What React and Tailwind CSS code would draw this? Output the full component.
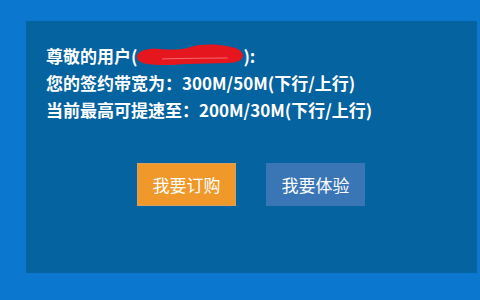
import React from 'react';

const Redact = () => (
  <span className="inline-block w-[106px] h-[20px] align-[-3px] relative">
    <svg viewBox="0 0 110 22" preserveAspectRatio="none" className="absolute -top-[2px] left-0 w-[106px] h-[22px]">
      <path
        d="M0 12 C 2 6, 12 4, 24 5 C 36 6, 46 6, 56 3 C 66 0, 80 0, 92 2 C 102 3, 109 6, 110 11 C 110 16, 104 19, 94 19 C 80 19, 66 20, 52 20 C 36 21, 18 22, 6 19 C 1 17, 0 15, 0 12 Z"
        fill="#e6161e"
      />
      <path d="M26 15 C 48 14, 70 14, 94 14" stroke="#f26a6e" strokeWidth="1.2" fill="none" />
    </svg>
  </span>
);

export default function App() {
  return (
    <div className="w-[480px] h-[300px] bg-[#0b77cf] pt-[21px] pl-[26px] font-['Noto_Sans_CJK_SC','Noto_Sans',sans-serif]">
      <div className="w-[451px] h-[252px] bg-[#05639f] pt-[21px] pl-[20px] flex flex-col">
        <div className="text-white font-bold text-[17px] leading-[27px]">
          <p>
            尊敬的用户(<Redact />):
          </p>
          <p>您的签约带宽为：300M/50M(下行/上行)</p>
          <p>当前最高可提速至：200M/30M(下行/上行)</p>
        </div>
        <div className="flex gap-[30px] mt-[40px] pl-[91px]">
          <button className="w-[99px] h-[43px] bg-[#f0982a] border border-[#d9a060] text-white text-[17px]">
            我要订购
          </button>
          <button className="w-[99px] h-[43px] bg-[#3a76b6] text-white text-[17px]">
            我要体验
          </button>
        </div>
      </div>
    </div>
  );
}
